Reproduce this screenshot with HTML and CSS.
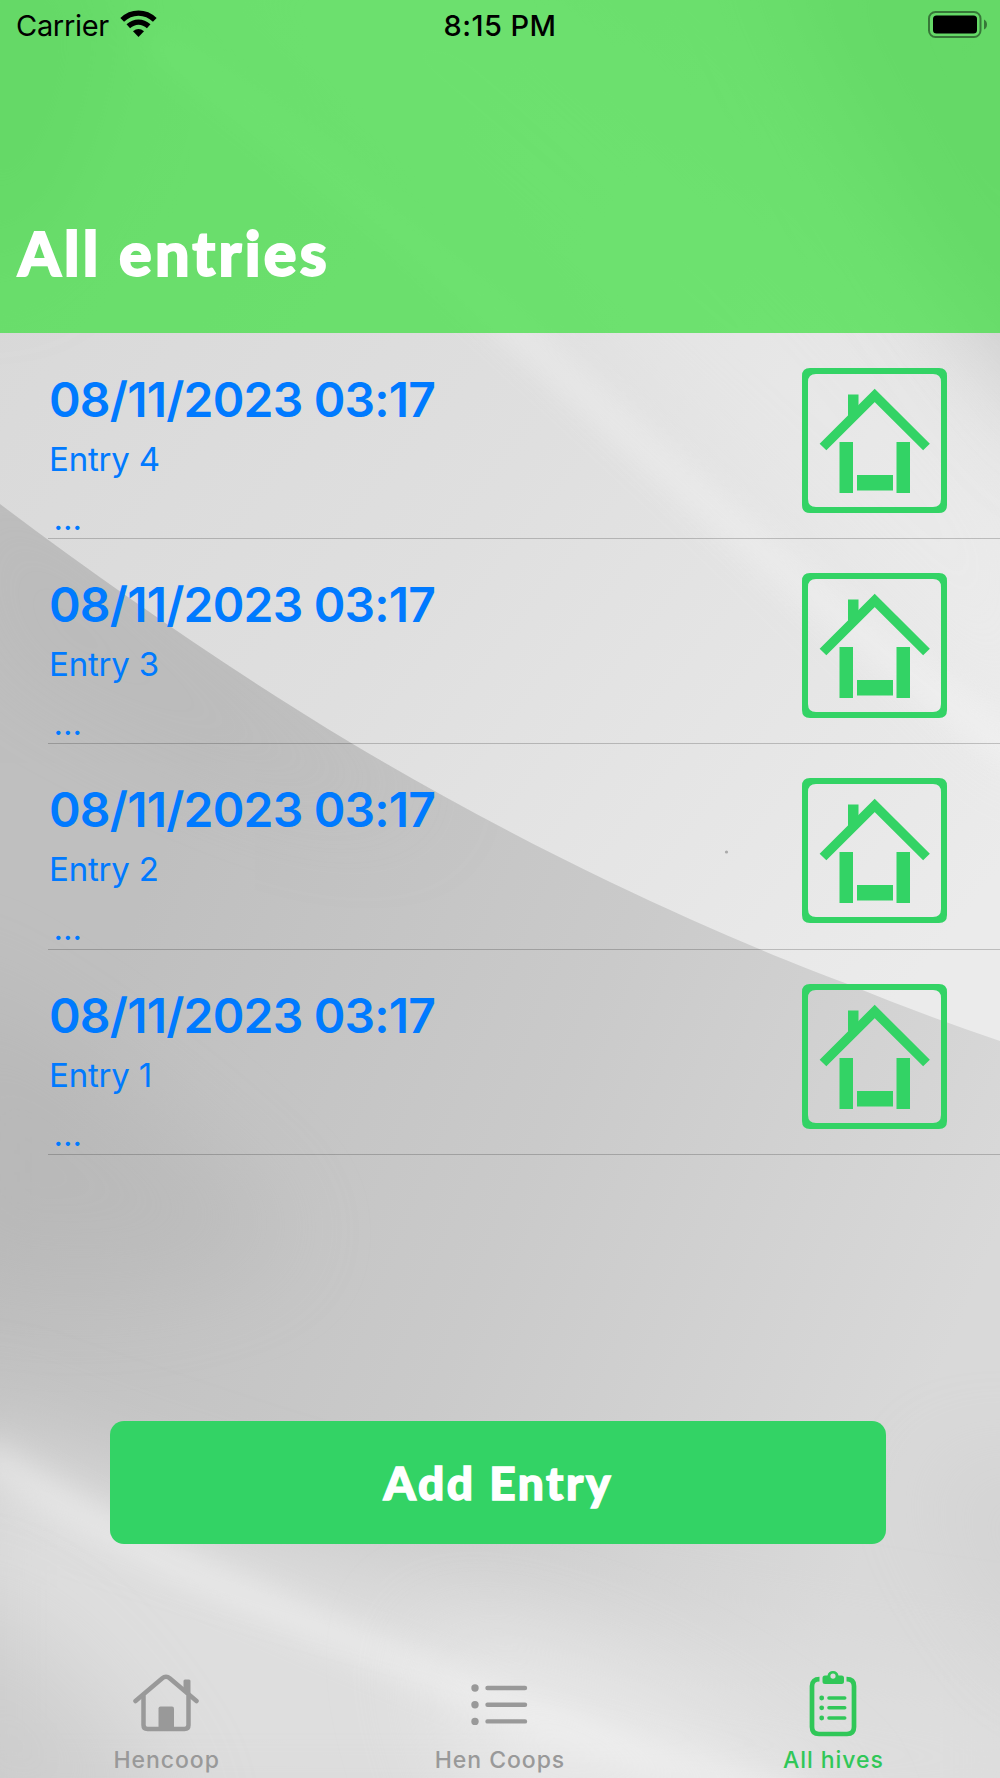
FILE: index.html
```html
<!DOCTYPE html>
<html lang="en">
<head>
<meta charset="utf-8">
<title>All entries</title>
<link rel="stylesheet" href="styles.css">
</head>
<body>
<svg width="0" height="0" class="defs" aria-hidden="true">
  <symbol id="coop" viewBox="0 0 145 145">
    <path fill-rule="evenodd" d="M8 0H137Q145 0 145 8V137Q145 145 137 145H8Q0 145 0 137V8Q0 0 8 0ZM14 6Q6 6 6 14V131Q6 139 14 139H131Q139 139 139 131V14Q139 6 131 6Z" fill="currentColor"/>
    <path d="M21 79L72.700 27.500L124.500 79" fill="none" stroke="currentColor" stroke-width="9.500"/>
    <path d="M46 26.500h10.500v13L46 49zM37.500 74H51v51H37.500zM94.500 74H108v51H94.500zM55 107h36v15.500H55z" fill="currentColor"/>
  </symbol>
</svg>
<div class="screen">
  <svg class="backdrop" viewBox="0 0 1000 1778" aria-hidden="true">
    <defs>
      <linearGradient id="upper" gradientUnits="userSpaceOnUse" x1="0" y1="300" x2="900" y2="1000">
        <stop offset="0" stop-color="#d9d9d9"/><stop offset=".45" stop-color="#dfdfdf"/><stop offset="1" stop-color="#ebebeb"/>
      </linearGradient>
      <linearGradient id="lower" gradientUnits="userSpaceOnUse" x1="100" y1="1000" x2="950" y2="1350">
        <stop offset="0" stop-color="#bfbfbf"/><stop offset=".5" stop-color="#cacaca"/><stop offset="1" stop-color="#d9d9d9"/>
      </linearGradient>
      <filter id="soft" x="-50%" y="-50%" width="200%" height="200%"><feGaussianBlur stdDeviation="50"/></filter>
      <filter id="glow" x="-30%" y="-30%" width="160%" height="160%"><feGaussianBlur stdDeviation="15"/></filter>
      <clipPath id="lower-area"><path d="M0 504C115 591 240 676 352 743.500C430 790 520 839 610 882C700 925 790 963 845 983Q920 1014 1000 1041V1778H0Z"/></clipPath>
    </defs>
    <rect width="1000" height="1778" fill="url(#upper)"/>
    <path d="M100-60Q500 230 1060 800V520Q800 200 480-60Z" fill="#f4f4f4" opacity=".25" filter="url(#soft)"/>
    <path d="M760-80H1100V460Q930 320 760-80Z" fill="#b8b8b8" opacity=".6" filter="url(#soft)"/>
    <path d="M-60-60H100Q130 100 20 260H-60Z" fill="#b4b4b4" opacity=".5" filter="url(#soft)"/>
    <path d="M150 38C310 150 450 270 550 362S850 635 1040 770" fill="none" stroke="#fff" stroke-width="26" opacity=".3" filter="url(#glow)"/>
    <g clip-path="url(#lower-area)">
      <rect y="480" width="1000" height="1298" fill="url(#lower)"/>
      <path d="M-60 430Q210 700 440 800Q350 860 0 660Z" fill="#b3b3b3" opacity=".3" filter="url(#soft)"/>
      <path d="M-80 960Q120 1060 300 1240Q130 1330-80 1270Z" fill="#aaa" opacity=".3" filter="url(#soft)"/>
      <path d="M-60 1420Q240 1530 480 1590T1060 1690V1840H-60Z" fill="#dedede" filter="url(#soft)"/>
      <path d="M-20 1452Q70 1512 160 1556T450 1683T800 1800" fill="none" stroke="#fff" stroke-width="30" opacity=".38" filter="url(#glow)"/>
      <path d="M420 1630Q650 1650 850 1840H480Z" fill="#f3f3f3" opacity=".5" filter="url(#soft)"/>
      <path d="M-80 1600Q60 1600 180 1840H-80Z" fill="#b8b8b8" opacity=".4" filter="url(#soft)"/>
      <path d="M920 1460H1080V1700Q980 1620 920 1460Z" fill="#c4c4c4" opacity=".3" filter="url(#soft)"/>
    </g>
    <circle cx="726.500" cy="852" r="1.600" fill="#aaa"/>
  </svg>

  <header class="header">
    <div class="status">
      <div class="carrier"><span class="carrier-name">Carrier</span>
        <svg width="37" height="28" viewBox="0 0 37 28" aria-hidden="true">
          <g fill="none" stroke="#000" stroke-width="5.300">
            <path d="M2.200 9.900C11.500.900 25.500.900 34.800 9.900"/>
            <path d="M8.300 16.300C14.500 10.700 22.500 10.700 28.700 16.300"/>
          </g>
          <path d="M13 21.300Q18.500 16.700 24 21.300L18.500 27z"/>
        </svg>
      </div>
      <span class="time">8:15 PM</span>
      <svg class="battery" width="60" height="28" viewBox="0 0 60 28" aria-hidden="true">
        <rect x="1" y="1" width="51.500" height="25" rx="6.500" fill="none" stroke="#000" stroke-opacity=".45" stroke-width="2"/>
        <rect x="5" y="4.500" width="44" height="18" rx="3.500"/>
        <path d="M56 8.500Q59 10 59 13.500T56 18.500Z" fill-opacity=".45"/>
      </svg>
    </div>
    <h1 class="title">All entries</h1>
  </header>

  <main class="entries">
    <article class="entry"><div class="entry-text"><h2 class="date">08/11/2023 03:17</h2><p class="name">Entry 4</p><p class="more">...</p></div><svg class="coop"><use href="#coop"/></svg></article>
    <article class="entry"><div class="entry-text"><h2 class="date">08/11/2023 03:17</h2><p class="name">Entry 3</p><p class="more">...</p></div><svg class="coop"><use href="#coop"/></svg></article>
    <article class="entry"><div class="entry-text"><h2 class="date">08/11/2023 03:17</h2><p class="name">Entry 2</p><p class="more">...</p></div><svg class="coop"><use href="#coop"/></svg></article>
    <article class="entry"><div class="entry-text"><h2 class="date">08/11/2023 03:17</h2><p class="name">Entry 1</p><p class="more">...</p></div><svg class="coop"><use href="#coop"/></svg></article>
  </main>

  <button class="add" type="button">Add Entry</button>

  <nav class="tabs">
    <a class="tab">
      <svg width="66" height="70" viewBox="0 0 66 70" aria-hidden="true">
        <g fill="none" stroke="currentColor" stroke-width="4.500" stroke-linecap="round" stroke-linejoin="round">
          <path d="M2.500 31L29 8.500Q33 5 37 8.500L63.500 31"/>
          <path d="M10.500 26V55Q10.500 59 14.500 59H51.500Q55.500 59 55.500 55V26"/>
        </g>
        <path d="M50.500 21V11Q50.500 9.500 52 9.500H56Q57.500 9.500 57.500 11V27z" fill="currentColor"/>
        <path d="M25.500 59V38.500Q25.500 36.500 27.500 36.500H39Q41 36.500 41 38.500V59z" fill="currentColor"/>
      </svg>
      <span class="label">Hencoop</span>
    </a>
    <a class="tab">
      <svg width="58" height="70" viewBox="0 0 58 70" aria-hidden="true">
        <g fill="currentColor"><circle cx="5" cy="18" r="3.700"/><circle cx="5" cy="34.700" r="3.700"/><circle cx="5" cy="51.400" r="3.700"/></g>
        <path d="M17.500 18H55M17.500 34.700H55M17.500 51.400H55" stroke="currentColor" stroke-width="4.400" stroke-linecap="round"/>
      </svg>
      <span class="label">Hen Coops</span>
    </a>
    <a class="tab active">
      <svg width="48" height="70" viewBox="0 0 48 70" aria-hidden="true">
        <path d="M10.500 9.200Q3 9.200 3 16V57Q3 64 10 64H38Q45 64 45 57V16Q45 9.200 37.500 9.200" fill="none" stroke="currentColor" stroke-width="4.700"/>
        <path fill-rule="evenodd" d="M16 5.500H18.500A5.600 5.600 0 0 1 29.500 5.500H32.500Q35 5.500 35 8V11.500Q35 14 32.500 14H16Q13.500 14 13.500 11.500V8Q13.500 5.500 16 5.500ZM24 3.500A2.600 2.600 0 1 0 24 8.700A2.600 2.600 0 1 0 24 3.500Z" fill="currentColor"/>
        <g fill="currentColor"><circle cx="12.700" cy="28" r="2.400"/><circle cx="12.700" cy="37.800" r="2.400"/><circle cx="12.700" cy="48" r="2.400"/></g>
        <path d="M20 28H35.700M20 37.800H35.700M20 48H35.700" stroke="currentColor" stroke-width="3.600" stroke-linecap="round"/>
      </svg>
      <span class="label">All hives</span>
    </a>
  </nav>
</div>
</body>
</html>
```
FILE: styles.css
```css
* { box-sizing: border-box; }
body { margin: 0; font-family: Inter, "Liberation Sans", sans-serif; }
h1, h2, p { margin: 0; }
.defs { position: absolute; }
.screen {
  position: relative;
  isolation: isolate;
  display: flex;
  flex-direction: column;
  width: 1000px;
  height: 1778px;
  overflow: hidden;
}
.backdrop { position: absolute; inset: 0; width: 1000px; height: 1778px; z-index: -1; }
.header {
  flex: none;
  display: flex;
  flex-direction: column;
  justify-content: space-between;
  height: 333.300px;
  padding-bottom: 48px;
  background: rgba(59, 224, 61, .7);
}
.status {
  display: grid;
  grid-template-columns: 1fr auto 1fr;
  align-items: center;
  height: 49px;
  padding: 0 12px 0 16px;
  font-size: 29px;
  line-height: 50px;
}
.carrier { display: flex; align-items: center; gap: 11px; }
.carrier svg { margin-bottom: 3px; }
.carrier-name { padding-top: 1px; letter-spacing: -.300px; }
.time { padding-top: 1px; font-weight: 500; letter-spacing: .450px; margin-left: -4px; }
.battery { justify-self: end; margin-bottom: 1px; }
.title {
  padding-left: 18px;
  color: #fff;
  font: 900 61px/64px Lato, sans-serif;
  letter-spacing: 3.200px;
  -webkit-text-stroke: 1.800px #fff;
}
.entries { flex: none; padding-top: .400px; }
.entry {
  display: flex;
  justify-content: space-between;
  height: 205.300px;
  margin-left: 48px;
  padding: 34px 53px 0 1px;
  border-bottom: 1px solid rgba(0, 0, 0, .2);
  color: #007aff;
}
.entry-text { padding-top: 2px; }
.date { font-size: 48px; line-height: 60px; font-weight: 600; letter-spacing: -.800px; white-space: nowrap; }
.name { margin-top: 9px; font-size: 33px; line-height: 40px; letter-spacing: -.200px; }
.more { padding: 19px 0 0 4.500px; font-size: 33px; line-height: 40px; }
.coop { width: 145px; height: 145px; color: #33d365; }
.add {
  flex: none;
  width: 776px;
  height: 123px;
  margin: 265.800px 0 0 110.300px;
  padding: 2px 0 0;
  border: 0;
  border-radius: 14px;
  background: #33d365;
  color: #fff;
  font: 900 46px/60px Lato, sans-serif;
  letter-spacing: 2.600px;
  -webkit-text-stroke: 1.400px #fff;
}
.tabs {
  display: grid;
  grid-template-columns: repeat(3, 1fr);
  margin-top: auto;
  height: 108px;
}
.tab { display: flex; flex-direction: column; align-items: center; color: #999; }
.tab svg { flex: none; margin-right: 1.500px; }
.label { margin: 5px 0 0; font-size: 23px; line-height: 30px; font-weight: 500; letter-spacing: .950px; }
.active { color: #30c758; }
```
